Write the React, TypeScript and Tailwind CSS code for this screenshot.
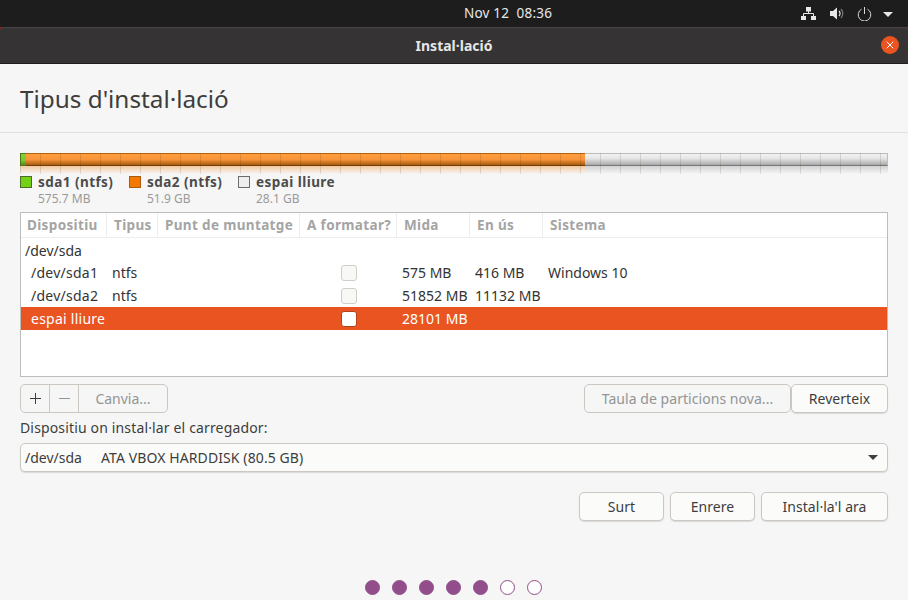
import React from 'react';
import { X } from 'lucide-react';

const columns = [
  { name: 'Dispositiu', width: 'w-[86px]' },
  { name: 'Tipus', width: 'w-[51px]' },
  { name: 'Punt de muntatge', width: 'w-[142px]' },
  { name: 'A formatar?', width: 'w-[97px]' },
  { name: 'Mida', width: 'w-[73px]' },
  { name: 'En ús', width: 'w-[73px]' },
  { name: 'Sistema', width: 'flex-1' },
];

const rows = [
  { device: '/dev/sda1', type: 'ntfs', size: '575 MB', used: '416 MB', system: 'Windows 10' },
  { device: '/dev/sda2', type: 'ntfs', size: '51852 MB', used: '11132 MB', system: '' },
  { device: 'espai lliure', type: '', size: '28101 MB', used: '', system: '', selected: true },
];

const legend = [
  { name: 'sda1 (ntfs)', size: '575.7 MB', swatch: 'bg-[#73d216] border-[#4e6b2a]', width: 'w-[109px]' },
  { name: 'sda2 (ntfs)', size: '51.9 GB', swatch: 'bg-[#f57900] border-[#a85a10]', width: 'w-[109px]' },
  { name: 'espai lliure', size: '28.1 GB', swatch: 'bg-[#eeeeee] border-[#6b6b6b]', width: 'w-[120px]' },
];

const Btn: React.FC<{ className?: string; disabled?: boolean; children: React.ReactNode }> = ({ className = '', disabled, children }) => (
  <button
    className={`h-[29px] rounded-[5px] border border-[#cdc7c2] flex items-center justify-center text-[14px] tracking-[0.05px] ${
      disabled ? 'bg-[#f6f6f6] text-[#929595] shadow-none' : 'bg-[#fbfbfa] text-[#3d3d3d] shadow-[0_1px_1px_rgba(0,0,0,0.12)]'
    } ${className}`}
  >
    {children}
  </button>
);

const PartitionBar = () => (
  <div className="relative mx-5 mt-5">
    <div className="flex h-[13px] overflow-hidden">
      <div className="w-[6px] border-y border-l border-[#4f7f1c] bg-[linear-gradient(#82d62f,#7ac52c_60%,#4f8a18)]" />
      <div className="w-[559px] border-y border-t-[#b3620f] border-b-[#6e3f0a] bg-[linear-gradient(#ff9e3d,#f7943a_50%,#a75c12)]" />
      <div className="flex-1 border border-t-[#bdbdbd] border-r-[#bdbdbd] border-l-0 border-b-[#777777] bg-[linear-gradient(#f2f2f2,#e6e6e6_40%,#a9a9a9)]" />
    </div>
    {/* reflection under the bar */}
    <div className="flex h-[8px]">
      <div className="w-[565px] bg-[linear-gradient(#f3c9a0,#f6f6f6)]" />
      <div className="flex-1 bg-[linear-gradient(#d2d2d2,#f6f6f6)]" />
    </div>
    {/* tick marks, every 20px */}
    <div className="absolute inset-0 bg-[repeating-linear-gradient(90deg,rgba(60,40,0,0.13)_0,rgba(60,40,0,0.13)_1px,transparent_1px,transparent_20px)]" />
  </div>
);

const Legend = () => (
  <div className="mx-5 mt-[1px] flex h-[37px]">
    {legend.map((item) => (
      <div key={item.name} className={`${item.width} flex`}>
        <div className={`mt-[1px] h-[12px] w-[12px] border ${item.swatch}`} />
        <div className="-mt-[1px] ml-[6px]">
          <div className="text-[13.5px] leading-[16px] font-bold tracking-[0.45px] whitespace-nowrap text-[#4c4c4c]">{item.name}</div>
          <div className="text-[12px] leading-[18px] text-[#9a9a9a]">{item.size}</div>
        </div>
      </div>
    ))}
  </div>
);

const PartitionTable = () => (
  <div className="mx-5 h-[165px] border border-[#bdbdbd] bg-white">
    <div className="flex h-[25px] border-b border-[#ededed]">
      {columns.map((col) => (
        <div
          key={col.name}
          className={`${col.width} border-r border-[#ededed] pl-[7px] text-[13.5px] leading-[25px] font-bold tracking-[0.35px] text-[#a4a4a4] whitespace-nowrap first:pl-[6px] last:border-r-0`}
        >
          {col.name}
        </div>
      ))}
    </div>
    <div className="h-[23px] pl-[4px] text-[14px] leading-[25px] text-[#333333]">/dev/sda</div>
    {rows.map((row) => (
      <div
        key={row.device}
        className={`flex h-[23px] text-[14px] leading-[23px] whitespace-nowrap ${row.selected ? 'bg-[#e95420] text-white' : 'text-[#333333]'}`}
      >
        <div className="w-[86px] pl-[10px] tracking-[0.25px]">{row.device}</div>
        <div className="w-[51px] pl-[5px]">{row.type}</div>
        <div className="w-[142px]" />
        <div className="flex w-[97px] items-center justify-center">
          <div
            className={`ml-[1px] h-[16px] w-[16px] rounded-[3px] border ${row.selected ? 'border-[#b5411a] bg-white' : 'border-[#d2cdc8] bg-[#f8f8f7]'}`}
          />
        </div>
        <div className="w-[73px] pl-[5px]">{row.size}</div>
        <div className="w-[73px] pl-[5px]">{row.used}</div>
        <div className="flex-1 pl-[5px]">{row.system}</div>
      </div>
    ))}
  </div>
);

const Toolbar = () => (
  <div className="mx-5 mt-[7px] flex justify-between">
    <div className="flex h-[29px] w-[148px] rounded-[5px] border border-[#cdc7c2] bg-[#f6f6f6] text-[14px]">
      <div className="flex w-[29px] items-center justify-center border-r border-[#cdc7c2]">
        <svg width="13" height="13" viewBox="0 0 13 13">
          <path d="M6.5 1v11M1 6.5h11" stroke="#3d3d3d" strokeWidth="1" fill="none" />
        </svg>
      </div>
      <div className="flex w-[29px] items-center justify-center border-r border-[#cdc7c2]">
        <svg width="13" height="13" viewBox="0 0 13 13">
          <path d="M1 6.5h11" stroke="#929595" strokeWidth="1" fill="none" />
        </svg>
      </div>
      <div className="flex flex-1 items-center justify-center text-[#929595]">Canvia...</div>
    </div>
    <div className="flex">
      <Btn disabled className="w-[207px]">Taula de particions nova...</Btn>
      <Btn className="w-[97px]">Reverteix</Btn>
    </div>
  </div>
);

const Dots = () => (
  <div className="mt-auto mb-[5px] flex justify-center gap-[12px] pr-[1px]">
    {[0, 1, 2, 3, 4, 5, 6].map((i) => (
      <div
        key={i}
        className={`h-[15px] w-[15px] rounded-full border border-[#924d8b] ${i < 5 ? 'bg-[#924d8b]' : 'bg-white'}`}
      />
    ))}
  </div>
);

export default function App() {
  return (
    <div className="flex h-[600px] w-[908px] flex-col overflow-hidden bg-[#1d1d1d] font-['Noto_Sans',sans-serif]">
      {/* Top bar */}
      <div className="relative flex h-[27px] shrink-0 items-center justify-end bg-[#1d1d1d] text-[#e8e8e8]">
        <div className="absolute left-[464px] top-0 text-[13.5px] leading-[26px] tracking-[0.2px] whitespace-pre">Nov 12  08:36</div>
        <svg className="mr-[14px]" width="15" height="13" viewBox="0 0 15 13" fill="#e8e8e8">
          <path d="M5 0h5v4.500H5zM0 9h5v4H0zM10 9h5v4h-5z" />
          <path d="M7.500 4v2.500M2.500 9V6.500h10V9" stroke="#e8e8e8" strokeWidth="1" fill="none" />
        </svg>
        <svg className="mr-[13px]" width="14" height="13" viewBox="0 0 14 13">
          <path d="M0 4h3L7 0.500v12L3 9H0z" fill="#e8e8e8" />
          <path d="M9 4a3.500 3.500 0 0 1 0 5" stroke="#e8e8e8" strokeWidth="1.200" fill="none" />
          <path d="M11 2a6.500 6.500 0 0 1 0 9" stroke="#777777" strokeWidth="1.200" fill="none" />
        </svg>
        <svg className="mr-[11px]" width="15" height="14" viewBox="0 0 15 14">
          <path d="M4.500 2.200a6.300 6.300 0 1 0 6 0M7.500 0v7" stroke="#d8d8d8" strokeWidth="1" fill="none" />
        </svg>
        <svg className="mr-[15px] mt-[1px]" width="10" height="5" viewBox="0 0 10 5">
          <path d="M0 0h10L5 5z" fill="#e8e8e8" />
        </svg>
      </div>

      {/* Title bar, with a bit of wallpaper showing in the corners */}
      <div className="h-[37px] shrink-0 bg-[linear-gradient(#8a1f1f,#8a1f1f_4px,#353333_4px)]">
        <div className="relative flex h-[37px] items-center justify-center rounded-t-[4px] border-t border-b border-t-[#454343] border-b-[#1f1e1e] bg-[#353333]">
          <span className="text-[14px] font-bold text-[#e6e6e6]">Instal·lació</span>
          <div className="absolute right-[9px] top-[8px] flex h-[18px] w-[18px] items-center justify-center rounded-full bg-[#e95420]">
            <X size={12} color="#ffffff" strokeWidth={2} />
          </div>
        </div>
      </div>

      {/* Content */}
      <div className="flex flex-1 flex-col bg-[#f6f6f6]">
        <div className="h-[69px] border-b border-[#e0e0e0] pl-5 text-[24.3px] leading-[70px] text-[#3d3d3d]">
          Tipus d'instal·lació
        </div>
        <PartitionBar />
        <Legend />
        <PartitionTable />
        <Toolbar />
        <div className="mx-5 mt-[5px] text-[14px] leading-[20px] tracking-[0.15px] text-[#3d3d3d]">Dispositiu on instal·lar el carregador:</div>
        <div className="mx-5 mt-[5px] flex h-[29px] items-center justify-between rounded-[5px] border border-[#cdc7c2] bg-[#fbfbfa] pr-[9px] pl-[4px] text-[14px] whitespace-pre text-[#3d3d3d] shadow-[0_1px_1px_rgba(0,0,0,0.12)]">
          <div className="flex">
            <span className="w-[76px]">/dev/sda</span>
            <span className="tracking-[0.1px]">ATA VBOX HARDDISK (80.5 GB)</span>
          </div>
          <svg width="10" height="5" viewBox="0 0 10 5">
            <path d="M0 0h10L5 5z" fill="#3d3d3d" />
          </svg>
        </div>
        <div className="mx-5 mt-[20px] flex justify-end gap-[6px]">
          <Btn className="w-[85px]">Surt</Btn>
          <Btn className="w-[85px]">Enrere</Btn>
          <Btn className="w-[127px]">Instal·la'l ara</Btn>
        </div>
        <Dots />
      </div>
    </div>
  );
}
